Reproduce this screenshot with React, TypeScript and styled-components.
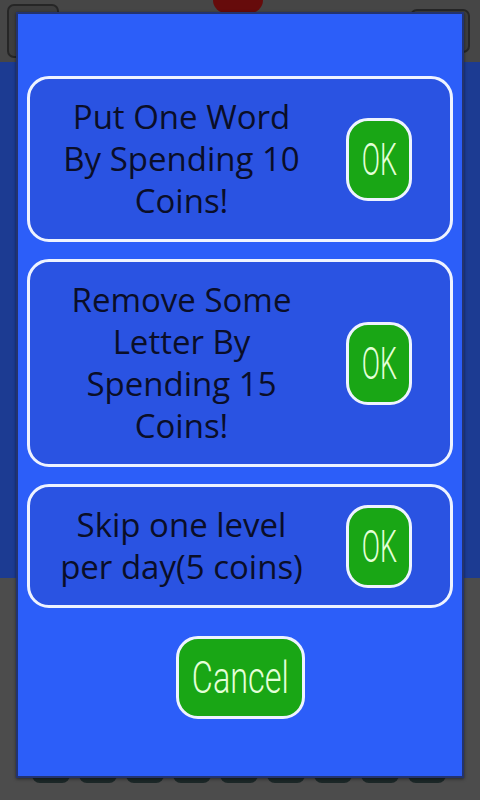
import React from 'react';
import styled, { createGlobalStyle } from 'styled-components';

const GlobalStyle = createGlobalStyle`
  html, body {
    margin: 0;
    padding: 0;
    width: 480px;
    height: 800px;
    overflow: hidden;
    background: #4b4b4b;
    font-family: "Open Sans", Roboto, "Liberation Sans", sans-serif;
  }
`;

const Screen = styled.div`
  position: relative;
  width: 480px;
  height: 800px;
  display: flex;
  flex-direction: column;
  background: #4c4c4c;
`;

const TopBar = styled.div`
  height: 62px;
  display: flex;
  align-items: center;
  justify-content: space-between;
  padding: 0 10px 0 7px;
  background: #464646;
  box-sizing: border-box;
`;

const BarButton = styled.div<{ w: number; h: number }>`
  width: ${p => p.w}px;
  height: ${p => p.h}px;
  border-radius: 7px;
  background: #3e3e3e;
  border: 2px solid #262626;
  box-sizing: border-box;
`;

const RedBlob = styled.div`
  align-self: flex-start;
  width: 50px;
  height: 13px;
  margin-left: 6px;
  border-radius: 0 0 25px 25px;
  background: #660b0b;
`;

const BlueBand = styled.div`
  height: 516px;
  background: #1c3b92;
`;

const BottomArea = styled.div`
  flex: 1;
  display: flex;
  flex-direction: column;
  justify-content: flex-end;
  padding: 0 0 17px 32px;
`;

const TileRow = styled.div`
  display: flex;
  gap: 9px;
`;

const Tile = styled.div`
  width: 38px;
  height: 50px;
  border-radius: 8px;
  background: #1c2828;
`;

const Dialog = styled.div`
  position: absolute;
  left: 16px;
  top: 12px;
  width: 448px;
  height: 766px;
  box-sizing: border-box;
  background: #2c5ef9;
  border: 2px solid #23336e;
  box-shadow: 0 1px 3px rgba(0, 0, 0, 0.5);
  display: flex;
  flex-direction: column;
  align-items: center;
  padding: 62px 9px 0;
  gap: 17px;
`;

const Option = styled.div`
  width: 100%;
  box-sizing: border-box;
  display: flex;
  align-items: center;
  background: #2a53e2;
  border: 3px solid #eef3ff;
  border-radius: 22px;
  padding: 17px 38px 17px 0;
`;

const OptionText = styled.div`
  flex: 1;
  text-align: center;
  color: #0a0e28;
  font-size: 33px;
  font-weight: 500;
  line-height: 42px;
  margin-right: 13px;
  white-space: nowrap;
`;

const GreenButton = styled.div<{ w: number }>`
  width: ${p => p.w}px;
  height: 83px;
  box-sizing: border-box;
  flex-shrink: 0;
  display: flex;
  align-items: center;
  justify-content: center;
  background: #19a615;
  border: 3px solid #eef3ff;
  border-radius: 22px;
  color: #e4ffd8;
`;

const ButtonLabel = styled.span<{ sx: number }>`
  display: inline-block;
  font-family: Roboto, "DejaVu Sans", sans-serif;
  font-weight: 300;
  font-size: 45px;
  line-height: 1;
  transform: scaleX(${p => p.sx});
`;

const CancelWrap = styled.div`
  margin-top: 11px;
`;

const options = [
  ['Put One Word', 'By Spending 10', 'Coins!'],
  ['Remove Some', 'Letter By', 'Spending 15', 'Coins!'],
  ['Skip one level', 'per day(5 coins)'],
];

export default function App() {
  return (
    <>
      <GlobalStyle />
      <Screen>
        <TopBar>
          <BarButton w={52} h={54} />
          <RedBlob />
          <BarButton w={60} h={44} />
        </TopBar>
        <BlueBand />
        <BottomArea>
          <TileRow>
            {Array.from({ length: 9 }).map((_, i) => (
              <Tile key={i} />
            ))}
          </TileRow>
        </BottomArea>
        <Dialog>
          {options.map((lines, i) => (
            <Option key={i}>
              <OptionText>
                {lines.map((l, j) => (
                  <div key={j}>{l}</div>
                ))}
              </OptionText>
              <GreenButton w={66}>
                <ButtonLabel sx={0.6}>OK</ButtonLabel>
              </GreenButton>
            </Option>
          ))}
          <CancelWrap>
            <GreenButton w={129}>
              <ButtonLabel sx={0.72}>Cancel</ButtonLabel>
            </GreenButton>
          </CancelWrap>
        </Dialog>
      </Screen>
    </>
  );
}
